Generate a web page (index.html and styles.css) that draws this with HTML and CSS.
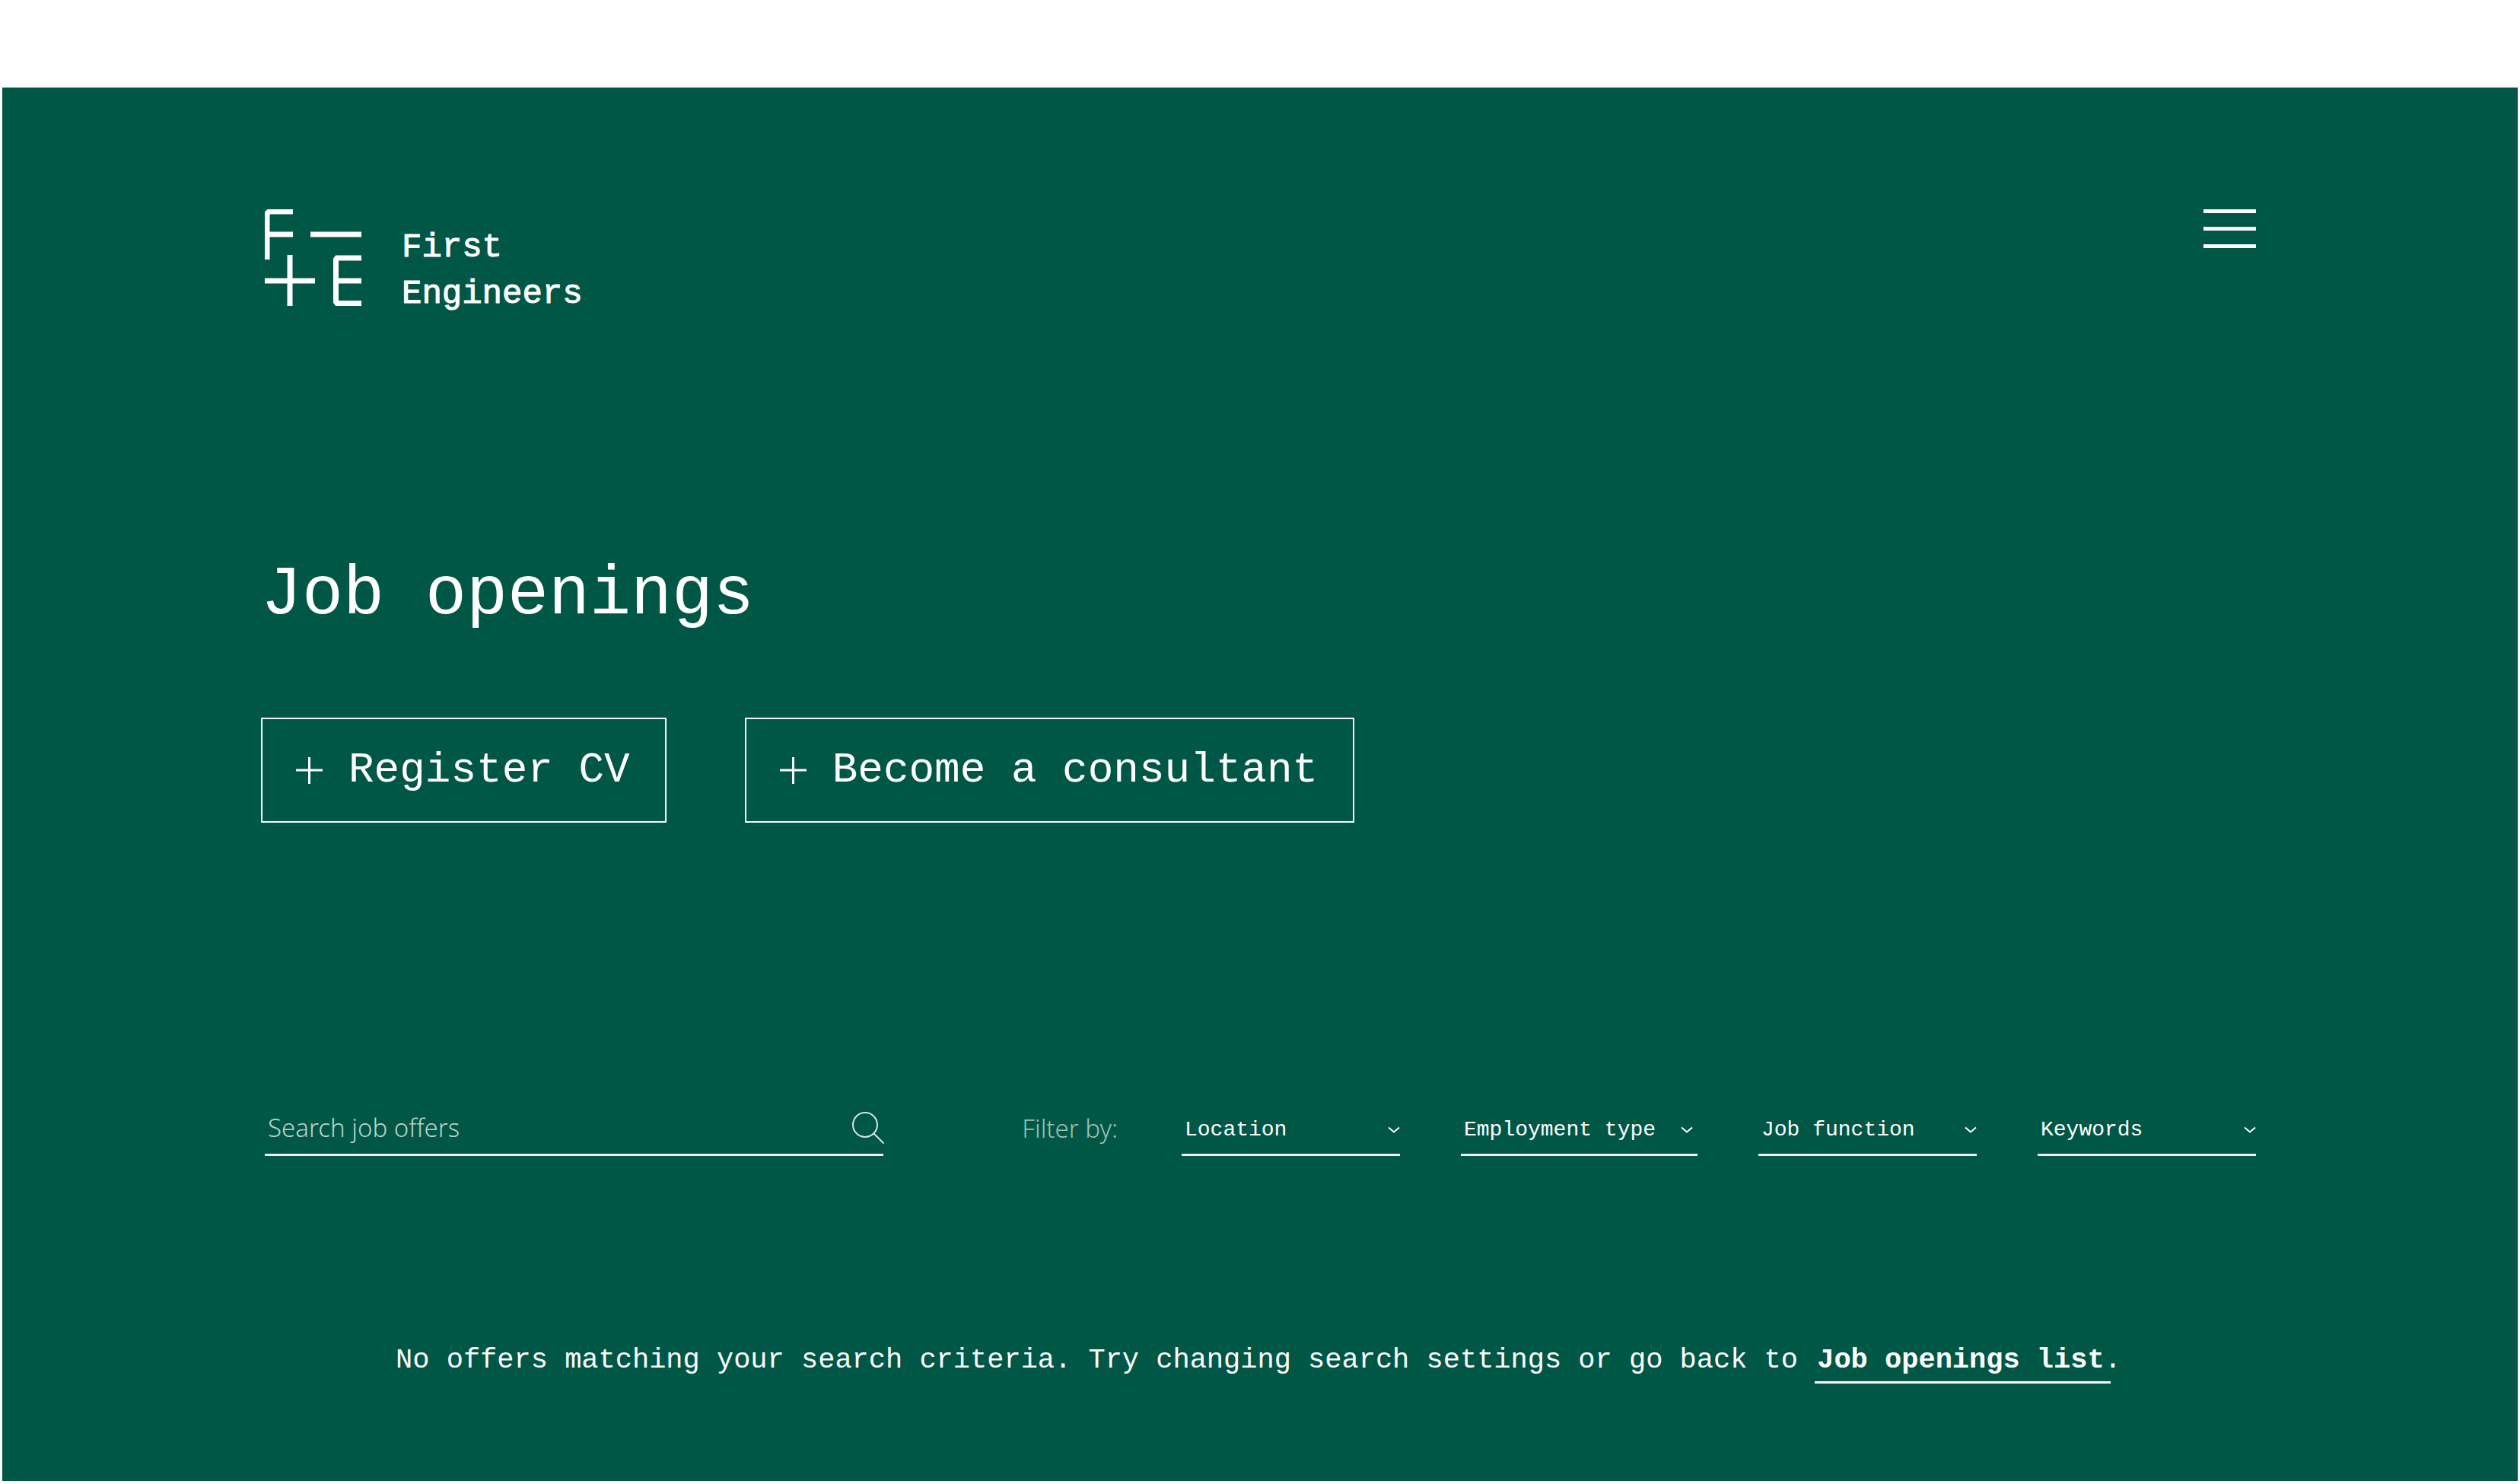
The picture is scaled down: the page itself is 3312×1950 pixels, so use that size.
FILE: index.html
```html
<!DOCTYPE html>
<html lang="en">
<head>
<meta charset="utf-8">
<title>Job openings – First Engineers</title>
<link rel="stylesheet" href="styles.css">
</head>
<body>
<div class="page">
  <header class="header">
    <a class="logo" href="#">
      <svg class="logo-mark" viewBox="0 0 128 128" aria-hidden="true">
        <path d="M37 3H5.500L3 5.500V66M3.500 33H37M60 33H127M0 94H66M33 60V127M127 64H95L93.500 66V121.500L95 123.500H127M94 94H127"/>
      </svg>
      <span class="logo-name">First<br>Engineers</span>
    </a>
    <button class="menu" type="button" aria-label="Menu">
      <span class="menu-bar"></span>
      <span class="menu-bar"></span>
      <span class="menu-bar"></span>
    </button>
  </header>

  <main>
    <h1 class="title">Job openings</h1>
    <div class="actions">
      <a class="action" href="#">
        <svg class="plus" viewBox="0 0 35 35" aria-hidden="true"><path d="M0 17H35M17.500 0V35"/></svg>
        <span>Register CV</span>
      </a>
      <a class="action" href="#">
        <svg class="plus" viewBox="0 0 35 35" aria-hidden="true"><path d="M0 17H35M17.500 0V35"/></svg>
        <span>Become a consultant</span>
      </a>
    </div>

    <form class="toolbar">
      <div class="search">
        <input class="search-input" type="text" placeholder="Search job offers" aria-label="Search job offers">
        <button class="search-button" type="button" aria-label="Search">
          <svg class="search-icon" viewBox="0 0 44 44" aria-hidden="true"><circle cx="18" cy="18" r="16"/><path d="M29.500 29.500L42.500 42.500"/></svg>
        </button>
      </div>
      <div class="filters">
        <span class="filters-label">Filter by:</span>
        <div class="filter">
          <select class="filter-select" aria-label="Location"><option>Location</option></select>
          <svg class="chevron" viewBox="0 0 16 10" aria-hidden="true"><path d="M1 1.500L8 7.500L15 1.500"/></svg>
        </div>
        <div class="filter filter-wide">
          <select class="filter-select" aria-label="Employment type"><option>Employment type</option></select>
          <svg class="chevron" viewBox="0 0 16 10" aria-hidden="true"><path d="M1 1.500L8 7.500L15 1.500"/></svg>
        </div>
        <div class="filter">
          <select class="filter-select" aria-label="Job function"><option>Job function</option></select>
          <svg class="chevron" viewBox="0 0 16 10" aria-hidden="true"><path d="M1 1.500L8 7.500L15 1.500"/></svg>
        </div>
        <div class="filter">
          <select class="filter-select" aria-label="Keywords"><option>Keywords</option></select>
          <svg class="chevron" viewBox="0 0 16 10" aria-hidden="true"><path d="M1 1.500L8 7.500L15 1.500"/></svg>
        </div>
      </div>
    </form>

    <p class="message">No offers matching your search criteria. Try changing search settings or go back to <a class="message-link" href="#">Job openings list</a>.</p>
  </main>
</div>
</body>
</html>
```

FILE: styles.css
```css
* {
  box-sizing: border-box;
}

body {
  margin: 0;
  min-height: 100vh;
  display: flex;
  flex-direction: column;
  padding: 115px 3px 4px;
  background: #fff;
  color: #fff;
  font-family: "Liberation Mono", monospace;
}

a {
  color: inherit;
  text-decoration: none;
}

button,
input,
select {
  margin: 0;
  padding: 0;
  border: 0;
  border-radius: 0;
  background: none;
  color: inherit;
  font: inherit;
}

svg {
  display: block;
  flex: none;
  fill: none;
  stroke: currentColor;
}

.page {
  flex: 1;
  padding: 160px 344px 0 340px;
  background: #005745;
}

.header {
  display: flex;
  justify-content: space-between;
  align-items: flex-start;
  padding-left: 5px;
}

.logo {
  display: flex;
  gap: 52px;
}

.logo-mark {
  width: 128px;
  height: 128px;
  stroke-width: 7;
}

.logo-name {
  padding-top: 20px;
  font-size: 44px;
  line-height: 61px;
  -webkit-text-stroke: 1px;
}

.menu {
  display: flex;
  flex-direction: column;
  gap: 18px;
  width: 69px;
}

.menu-bar {
  height: 5px;
  background: #fff;
}

.title {
  margin: 0;
  padding-top: 310px;
  font-size: 90px;
  font-weight: 400;
  line-height: 110px;
}

.actions {
  display: flex;
  gap: 103px;
  padding-top: 106px;
}

.action {
  display: flex;
  align-items: center;
  gap: 34px;
  height: 138px;
  padding: 0 46px 0 44px;
  border: 2px solid #fff;
  font-size: 56px;
}

.plus {
  width: 35px;
  height: 35px;
  stroke-width: 3;
}

.toolbar {
  display: flex;
  justify-content: space-between;
  padding: 368px 0 0 5px;
}

.search {
  display: flex;
  align-items: center;
  width: 813px;
  height: 70px;
  padding-bottom: 2px;
  border-bottom: 3px solid #eef4f2;
}

.search-input {
  flex: 1;
  padding-left: 4px;
  font-family: "Noto Sans", sans-serif;
  font-size: 33px;
  font-weight: 300;
  outline: 0;
}

.search-input::placeholder {
  color: #b8d2cb;
  opacity: 1;
}

.search-button {
  margin-right: -2px;
}

.search-icon {
  width: 44px;
  height: 44px;
  stroke: #d5e4e0;
  stroke-width: 2;
}

.filters {
  display: flex;
  align-items: stretch;
  gap: 80px;
}

.filters-label {
  align-self: center;
  padding: 0 4px 4px 0;
  color: #9dc0b7;
  font-family: "Noto Sans", sans-serif;
  font-size: 33px;
  font-weight: 300;
}

.filter {
  display: grid;
  align-items: center;
  width: 287px;
  padding-top: 4px;
  border-bottom: 3px solid #eef4f2;
  font-size: 28px;
}

.filter-wide {
  width: 311px;
  padding-right: 6px;
}

.filter-select {
  grid-area: 1 / 1;
  padding-left: 4px;
  appearance: none;
  outline: 0;
}

.chevron {
  grid-area: 1 / 1;
  justify-self: end;
  width: 16px;
  height: 10px;
  stroke-width: 2;
  pointer-events: none;
}

.message {
  margin: 0;
  padding-top: 244px;
  font-size: 37px;
  line-height: 48px;
  text-align: center;
}

.message-link {
  margin-right: -8px;
  padding: 0 8px 7px 3px;
  border-bottom: 3px solid #fff;
  font-weight: 700;
}
```
